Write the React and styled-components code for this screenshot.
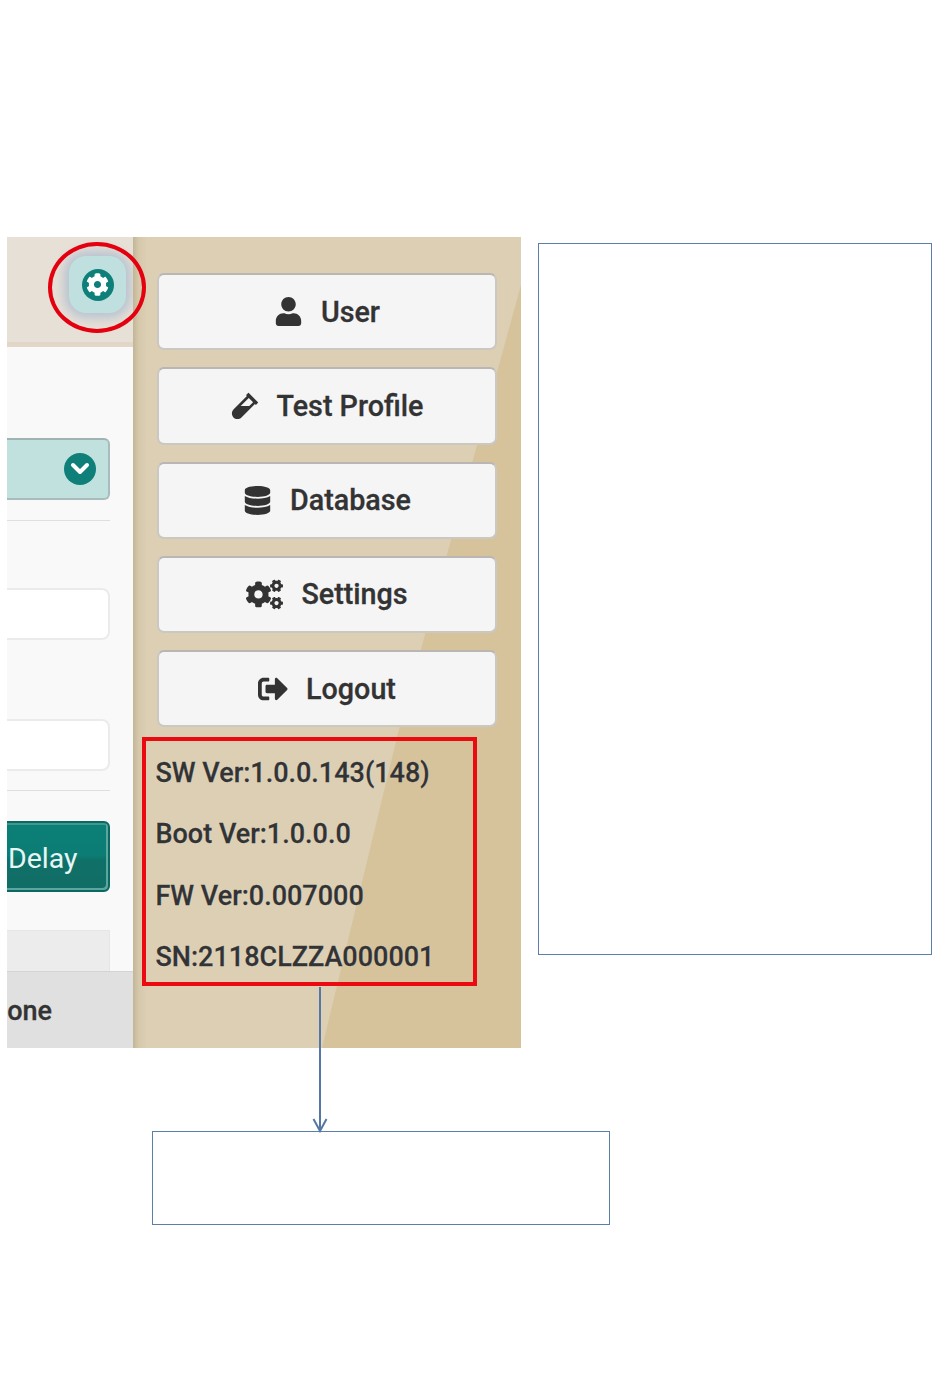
import styled, { createGlobalStyle } from 'styled-components';
import { FaUser, FaVial, FaDatabase, FaCogs, FaSignOutAlt, FaCog } from 'react-icons/fa';

const GlobalStyle = createGlobalStyle`
  html, body {
    margin: 0;
    background: #fff;
  }
  * {
    box-sizing: border-box;
  }
`;

const Sheet = styled.div`
  width: 950px;
  height: 1389px;
  padding: 237px 0 0 7px;
  font-family: Roboto, 'Liberation Sans', sans-serif;
  color: #333;
  overflow: hidden;
`;

const TopRow = styled.div`
  display: flex;
  align-items: flex-start;
`;

const Shot = styled.div`
  position: relative;
  display: flex;
  flex: none;
  width: 514px;
  height: 811px;
`;

const LeftPanel = styled.div`
  display: flex;
  flex-direction: column;
  width: 126px;
`;

const TopBar = styled.div`
  display: flex;
  justify-content: flex-end;
  flex: none;
  height: 110px;
  padding: 19px 7px 0 0;
  background: #e7e0d6;
  border-bottom: 5px solid #e2d7c6;
`;

const GearButton = styled.div`
  display: flex;
  align-items: center;
  justify-content: center;
  width: 57px;
  height: 57px;
  border-radius: 17px;
  background: #bfe0de;
  box-shadow: 0 0 11px 5px #b6c2d0;
`;

const TealDot = styled.span`
  display: flex;
  align-items: center;
  justify-content: center;
  flex: none;
  width: 32px;
  height: 32px;
  border-radius: 50%;
  background: #0e8079;
  color: #fff;
`;

const RedCircle = styled.div`
  position: absolute;
  left: 41px;
  top: 5px;
  width: 98px;
  height: 91px;
  border: 4px solid #e4000f;
  border-radius: 50%;
`;

const PanelBody = styled.div`
  flex: 1;
  padding: 91px 23px 0 0;
  background: #f9f9f9;
  overflow: hidden;
`;

const SelectBox = styled.div`
  display: flex;
  align-items: center;
  justify-content: flex-end;
  height: 62px;
  margin-left: -20px;
  padding-right: 12px;
  background: #c1e1df;
  border: 2px solid #a9bcbb;
  border-top-color: #9fb3b2;
  border-radius: 6px;
`;

const Rule = styled.div`
  height: 1px;
  margin-top: ${(p) => p.$top}px;
  background: #dfdfdf;
`;

const InputBox = styled.div`
  height: 52px;
  margin: ${(p) => p.$top}px 0 0 -20px;
  background: #fff;
  border: 2px solid #ebebeb;
  border-radius: 8px;
`;

const DelayButton = styled.div`
  display: flex;
  align-items: center;
  height: 71px;
  margin: 30px 0 0 -20px;
  padding: 3px 0 0 19px;
  background: linear-gradient(#0b7f76 0%, #0c7d74 48%, #0f7068 56%, #116d66 100%);
  border: 2px solid #0a6a63;
  border-radius: 6px;
  box-shadow: inset -2px -2px 0 #5da6a0, inset 0 2px 0 #3f9890;
  color: #e6f6f4;
  font-size: 28.5px;
`;

const GreyStrip = styled.div`
  height: 60px;
  margin: 38px 0 0 -20px;
  background: #ececec;
  border: 1px solid #e6e6e6;
`;

const PanelFooter = styled.div`
  display: flex;
  align-items: center;
  justify-content: flex-end;
  flex: none;
  height: 77px;
  padding: 2px 81px 0 0;
  background: #e0e0e0;
  border-top: 1px solid #d4d4d4;
  font-size: 27px;
  font-weight: 500;
  -webkit-text-stroke: 0.3px #333;
  overflow: hidden;
  white-space: nowrap;
`;

const FooterLabel = styled.span`
  width: 0;
  direction: rtl;
`;

const Sidebar = styled.div`
  position: relative;
  display: flex;
  flex-direction: column;
  gap: 17px;
  width: 388px;
  padding: 36px 24px 0;
  background: linear-gradient(90deg, #c3b698 0, #d5c8ab 6px, #dccfb3 14px, #dccfb3 100%);

  &::before {
    content: '';
    position: absolute;
    inset: 0;
    background: #d6c39b;
    clip-path: polygon(388px 48px, 388px 811px, 189px 811px, 265px 496px);
  }
`;

const MenuButton = styled.div`
  position: relative;
  display: flex;
  align-items: center;
  justify-content: center;
  gap: 18px;
  height: 77.25px;
  background: #f5f5f6;
  border: 2px solid #cbc7c3;
  border-top-color: #b9b6b4;
  border-radius: 7px;
  font-size: 28.7px;
  font-weight: 500;
  -webkit-text-stroke: 0.3px #333;
`;

const VersionBox = styled.div`
  position: relative;
  display: flex;
  flex-direction: column;
  gap: 25.2px;
  flex: none;
  width: 335px;
  height: 249px;
  margin: -7px 0 0 -15px;
  padding: 14px 9.5px 0;
  border: 4px solid #ea0a0f;
`;

const VersionLine = styled.div`
  font-size: 27px;
  font-weight: 500;
  line-height: 36px;
  white-space: nowrap;
  -webkit-text-stroke: 0.3px #333;
  text-shadow: 0 0 1px #fff;
`;

const NoteBox = styled.div`
  flex: none;
  width: 394px;
  height: 712px;
  margin: 6px 0 0 17px;
  border: 1px solid #5b7fa8;
`;

const LowerNote = styled.div`
  position: relative;
  width: 458px;
  height: 94px;
  margin: 83px 0 0 145px;
  border: 1px solid #5b7fa8;
`;

const ArrowSvg = styled.svg`
  position: absolute;
  left: 157px;
  top: -145px;
`;

const menuItems = [
  { label: 'User', Icon: FaUser, size: 29 },
  { label: 'Test Profile', Icon: FaVial, size: 28 },
  { label: 'Database', Icon: FaDatabase, size: 29 },
  { label: 'Settings', Icon: FaCogs, size: 37 },
  { label: 'Logout', Icon: FaSignOutAlt, size: 30 },
];

const versions = [
  'SW Ver:1.0.0.143(148)',
  'Boot Ver:1.0.0.0',
  'FW Ver:0.007000',
  'SN:2118CLZZA000001',
];

export default function App() {
  return (
    <Sheet>
      <GlobalStyle />
      <TopRow>
        <Shot>
          <LeftPanel>
            <TopBar>
              <GearButton>
                <TealDot>
                  <FaCog size={23} />
                </TealDot>
              </GearButton>
            </TopBar>
            <PanelBody>
              <SelectBox>
                <TealDot>
                  <svg width='20' height='14' viewBox='0 0 20 14' fill='none'>
                    <path d='M3 3 L10 10 L17 3' stroke='#fff' strokeWidth='4' strokeLinecap='round' strokeLinejoin='round' />
                  </svg>
                </TealDot>
              </SelectBox>
              <Rule $top={20} />
              <InputBox $top={67} />
              <InputBox $top={79} />
              <Rule $top={19} />
              <DelayButton>Delay</DelayButton>
              <GreyStrip />
            </PanelBody>
            <PanelFooter>
              <FooterLabel>Done</FooterLabel>
            </PanelFooter>
          </LeftPanel>
          <Sidebar>
            {menuItems.map(({ label, Icon, size }) => (
              <MenuButton key={label}>
                <Icon size={size} />
                {label}
              </MenuButton>
            ))}
            <VersionBox>
              {versions.map((line) => (
                <VersionLine key={line}>{line}</VersionLine>
              ))}
            </VersionBox>
          </Sidebar>
          <RedCircle />
        </Shot>
        <NoteBox />
      </TopRow>
      <LowerNote>
        <ArrowSvg width='20' height='146' viewBox='0 0 20 146' fill='none'>
          <path d='M10 0 V144 M3.5 132 L10 144 L16.5 132' stroke='#5577a5' strokeWidth='2' />
        </ArrowSvg>
      </LowerNote>
    </Sheet>
  );
}
